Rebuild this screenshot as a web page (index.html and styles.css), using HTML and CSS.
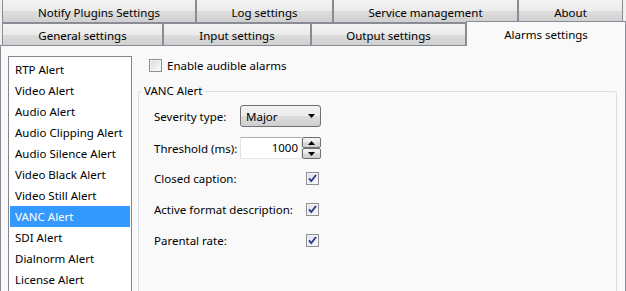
FILE: index.html
```html
<!DOCTYPE html>
<html>
<head>
<meta charset="utf-8">
<link rel="stylesheet" href="styles.css">
</head>
<body>
<div class="tabrow row-top">
  <div class="tab t-notify">Notify Plugins Settings</div>
  <div class="tab t-log">Log settings</div>
  <div class="tab t-service">Service management</div>
  <div class="tab t-about">About</div>
</div>
<div class="tabrow row-bottom">
  <div class="tab t-general">General settings</div>
  <div class="tab t-input">Input settings</div>
  <div class="tab t-output">Output settings</div>
  <div class="tab t-alarms selected">Alarms settings</div>
</div>
<div class="panel">
  <ul class="alert-list">
    <li>RTP Alert</li>
    <li>Video Alert</li>
    <li>Audio Alert</li>
    <li>Audio Clipping Alert</li>
    <li>Audio Silence Alert</li>
    <li>Video Black Alert</li>
    <li>Video Still Alert</li>
    <li class="active">VANC Alert</li>
    <li>SDI Alert</li>
    <li>Dialnorm Alert</li>
    <li>License Alert</li>
  </ul>
  <div class="settings">
    <div class="check-row">
      <span class="cb"></span>
      <span>Enable audible alarms</span>
    </div>
    <fieldset class="group">
      <legend>VANC Alert</legend>
      <div class="group-body">
        <div class="field f-combo">
          <span class="label">Severity type:</span>
          <div class="combo">
            <span>Major</span>
            <svg width="7" height="4" viewBox="0 0 7 4"><path d="M0 0H7L3.5 4Z" fill="#000"/></svg>
          </div>
        </div>
        <div class="field f-spin">
          <span class="label">Threshold (ms):</span>
          <div class="spin">
            <div class="spin-input">1000</div>
            <div class="spin-btns">
              <div class="spin-btn"><svg width="7" height="4" viewBox="0 0 7 4"><path d="M0 4H7L3.5 0Z" fill="#000"/></svg></div>
              <div class="spin-btn"><svg width="7" height="4" viewBox="0 0 7 4"><path d="M0 0H7L3.5 4Z" fill="#000"/></svg></div>
            </div>
          </div>
        </div>
        <div class="field f-check">
          <span class="label wide">Closed caption:</span>
          <span class="cb checked"><svg width="11" height="11" viewBox="0 0 11 11"><path d="M2 5.3 L4.3 8 L9 2" fill="none" stroke="#2f3a8f" stroke-width="1.9"/></svg></span>
        </div>
        <div class="field f-check">
          <span class="label wide">Active format description:</span>
          <span class="cb checked"><svg width="11" height="11" viewBox="0 0 11 11"><path d="M2 5.3 L4.3 8 L9 2" fill="none" stroke="#2f3a8f" stroke-width="1.9"/></svg></span>
        </div>
        <div class="field f-check">
          <span class="label wide">Parental rate:</span>
          <span class="cb checked"><svg width="11" height="11" viewBox="0 0 11 11"><path d="M2 5.3 L4.3 8 L9 2" fill="none" stroke="#2f3a8f" stroke-width="1.9"/></svg></span>
        </div>
      </div>
    </fieldset>
  </div>
</div>
</body>
</html>
```
FILE: styles.css
```css
html, body {
  margin: 0;
  padding: 0;
}
body {
  width: 626px;
  height: 291px;
  overflow: hidden;
  background: #f0f0f0;
  font-family: "Noto Sans", "Open Sans", sans-serif;
  font-size: 11.5px;
  color: #000;
}
.tabrow {
  display: flex;
  padding-left: 2px;
}
.row-top {
  margin-top: -1px;
  height: 24px;
}
.row-bottom {
  height: 22px;
}
.tab {
  box-sizing: border-box;
  border: 1px solid #898c95;
  background: linear-gradient(#f3f3f3 0%, #ebebeb 50%, #dddddd 50%, #d0d0d0 100%);
  display: flex;
  align-items: center;
  justify-content: center;
  white-space: nowrap;
  flex-shrink: 0;
}
.row-top .tab {
  height: 24px;
  padding-top: 2px;
}
.row-bottom .tab {
  height: 22px;
  border-bottom: none;
  padding-top: 1px;
}
.t-notify { width: 194px; }
.t-log { width: 137px; }
.t-service { width: 185px; }
.t-about { width: 105px; }
.t-general { width: 161px; }
.t-input { width: 148px; }
.t-output { width: 155px; }
.t-alarms { width: 160px; }
.row-bottom .tab.selected {
  height: 25px;
  margin-top: -2px;
  margin-bottom: -1px;
  background: #f9f9f9;
  position: relative;
  z-index: 1;
  padding-top: 0;
}
.panel {
  box-sizing: border-box;
  width: 626px;
  height: 260px;
  border: 1px solid #898c95;
  background: #f9f9f9;
  display: flex;
  align-items: flex-start;
  padding: 10px 0 0 7px;
}
.alert-list {
  box-sizing: border-box;
  width: 124px;
  height: 300px;
  flex-shrink: 0;
  margin: 0;
  padding: 2px 1px;
  list-style: none;
  background: #fff;
  border: 1px solid #828790;
}
.alert-list li {
  height: 21px;
  line-height: 21px;
  padding-left: 5px;
  white-space: nowrap;
}
.alert-list li.active {
  background: #3399ff;
  color: #fff;
}
.settings {
  margin-left: 6px;
  width: 479px;
}
.check-row {
  display: flex;
  align-items: center;
  height: 16px;
  margin-top: 1px;
  padding-left: 11px;
  gap: 5px;
}
.cb {
  box-sizing: border-box;
  width: 13px;
  height: 13px;
  flex-shrink: 0;
  border: 1px solid #8e8f8f;
  background: linear-gradient(135deg, #d9d9d9 0%, #eeeeee 60%, #fbfbfb 100%);
  box-shadow: inset 0 0 0 1px #f4f4f4;
  display: flex;
  align-items: center;
  justify-content: center;
}
.cb.checked {
  background: linear-gradient(135deg, #dfe0e8 0%, #eef0f4 60%, #fafafa 100%);
}
.cb svg {
  display: block;
}
.group {
  box-sizing: border-box;
  width: 479px;
  height: 300px;
  margin: 10px 0 0 0;
  padding: 0;
  border: 1px solid #d5dfe5;
  border-radius: 3px;
  min-width: 0;
}
.group legend {
  margin-left: 3px;
  padding: 0 2px;
  line-height: 16px;
}
.group-body {
  padding-left: 15px;
  padding-top: 6px;
}
.field {
  display: flex;
  align-items: center;
}
.f-combo {
  height: 22px;
}
.f-spin {
  height: 22px;
  margin-top: 10px;
}
.f-check {
  height: 31px;
}
.f-spin + .f-check {
  margin-top: 4px;
}
.label {
  width: 86px;
  flex-shrink: 0;
  white-space: nowrap;
}
.label.wide {
  width: 152px;
}
.combo {
  box-sizing: border-box;
  width: 81px;
  height: 22px;
  border: 1px solid #707070;
  border-radius: 3px;
  background: linear-gradient(#f2f2f2 0%, #ebebeb 50%, #dddddd 50%, #cfcfcf 100%);
  display: flex;
  align-items: center;
  justify-content: space-between;
  padding: 0 5px 0 5px;
}
.spin {
  display: flex;
  width: 81px;
  height: 22px;
}
.spin-input {
  box-sizing: border-box;
  width: 62px;
  height: 22px;
  border: 1px solid;
  border-color: #abadb3 #e2e3ea #e3e9ef #e2e3ea;
  background: #fff;
  text-align: right;
  padding-right: 3px;
  line-height: 20px;
}
.spin-btns {
  display: flex;
  flex-direction: column;
  width: 19px;
}
.spin-btn {
  box-sizing: border-box;
  height: 11px;
  border: 1px solid #707070;
  border-radius: 2px;
  background: linear-gradient(#f2f2f2 0%, #ebebeb 50%, #dddddd 50%, #cfcfcf 100%);
  display: flex;
  align-items: center;
  justify-content: center;
}
.spin-btn svg {
  display: block;
}
```
